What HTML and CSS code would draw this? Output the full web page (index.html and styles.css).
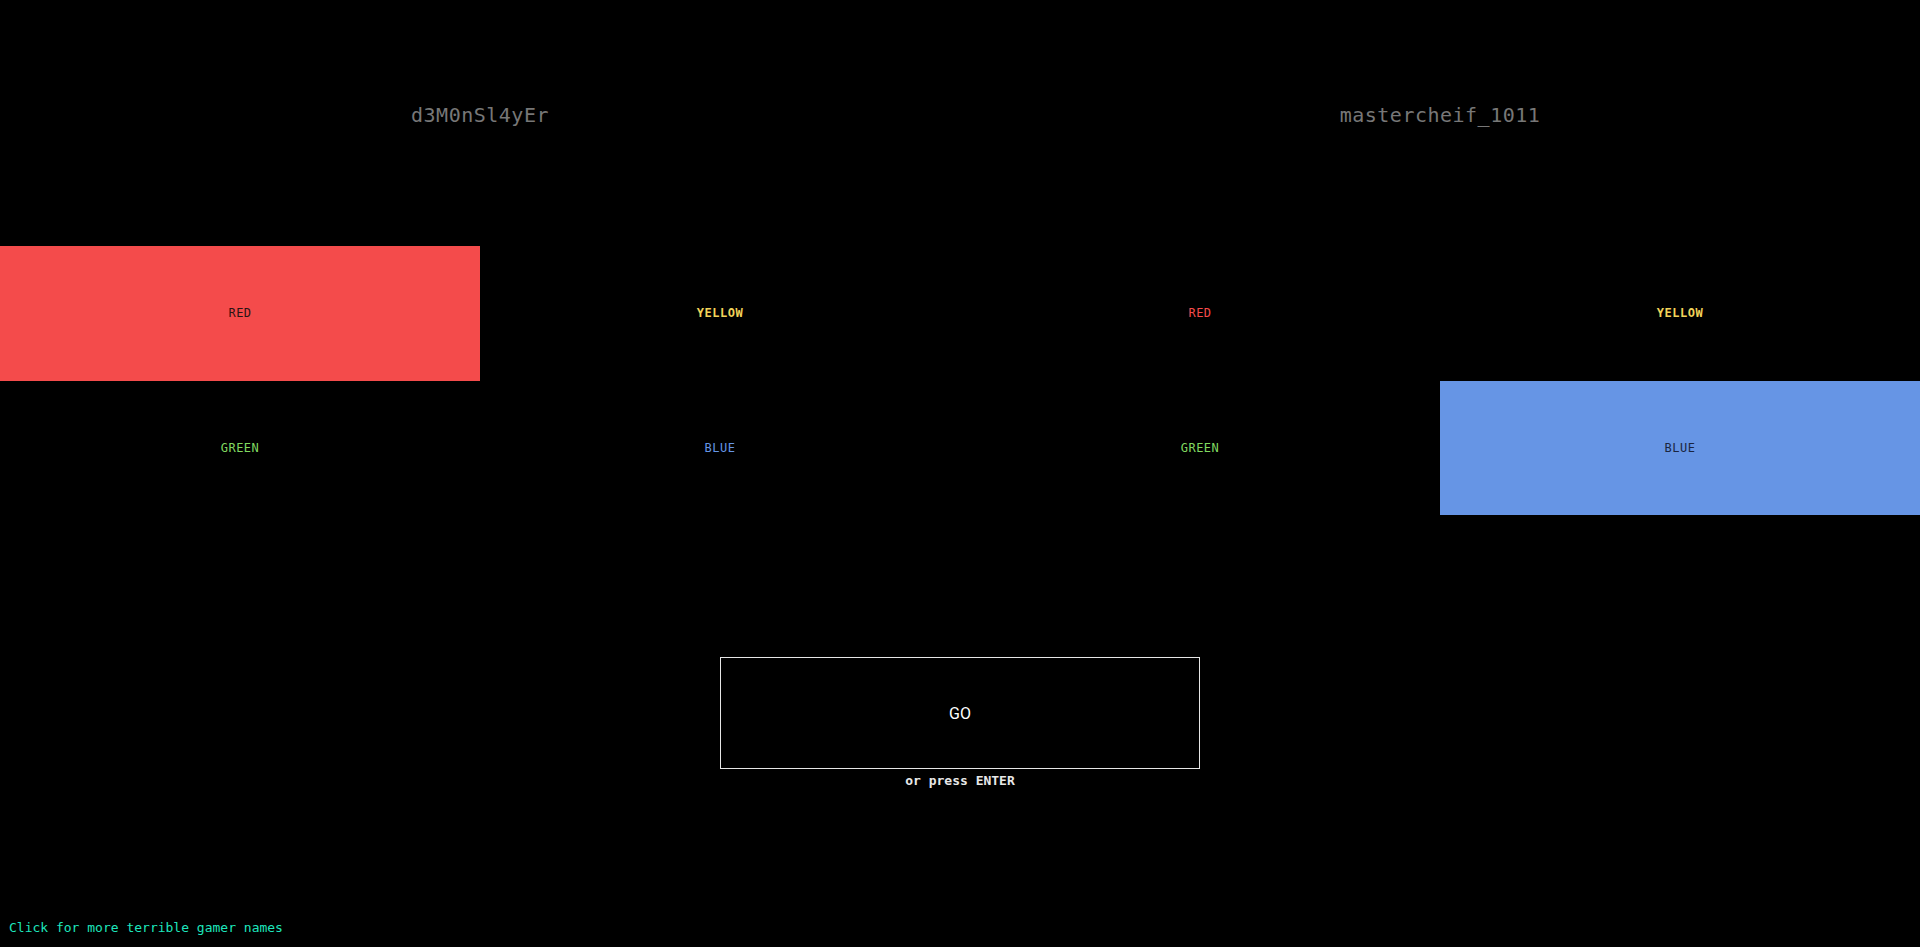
FILE: index.html
```html
<!DOCTYPE html>
<html>
<head>
<meta charset="utf-8">
<link rel="stylesheet" href="styles.css">
</head>
<body>
<div class="page">
  <header class="names">
    <div class="name">d3M0nSl4yEr</div>
    <div class="name">mastercheif_1011</div>
  </header>
  <section class="boards">
    <div class="board">
      <div class="cell red active">RED</div>
      <div class="cell yellow">YELLOW</div>
      <div class="cell green">GREEN</div>
      <div class="cell blue">BLUE</div>
    </div>
    <div class="board">
      <div class="cell red">RED</div>
      <div class="cell yellow">YELLOW</div>
      <div class="cell green">GREEN</div>
      <div class="cell blue active">BLUE</div>
    </div>
  </section>
  <section class="action">
    <button class="go">GO</button>
    <div class="hint">or press ENTER</div>
  </section>
  <footer class="footer">
    <a class="more" href="#">Click for more terrible gamer names</a>
  </footer>
</div>
</body>
</html>
```
FILE: styles.css
```css
html, body {
  margin: 0;
  padding: 0;
  background: #000;
}
.page {
  min-height: 947px;
  display: flex;
  flex-direction: column;
  font-family: "DejaVu Sans Mono", "Liberation Mono", monospace;
}
.names {
  display: grid;
  grid-template-columns: 1fr 1fr;
  padding-top: 101px;
}
.name {
  text-align: center;
  font-size: 20px;
  line-height: 28px;
  color: #777;
  letter-spacing: 0.5px;
}
.boards {
  display: grid;
  grid-template-columns: 1fr 1fr;
  margin-top: 117px;
}
.board {
  display: grid;
  grid-template-columns: 1fr 1fr;
  grid-auto-rows: 134.5px;
}
.cell {
  display: flex;
  align-items: center;
  justify-content: center;
  font-size: 12px;
  letter-spacing: 0.5px;
}
.cell.red { color: #f44b4b; }
.cell.yellow { color: #f2d45a; font-weight: bold; }
.cell.green { color: #80d860; }
.cell.blue { color: #6595e5; }
.cell.red.active { background: #f44b4b; color: #2a1414; }
.cell.blue.active { background: #6695e5; color: #1a2540; }
.action {
  display: flex;
  flex-direction: column;
  align-items: center;
  margin-top: 142px;
}
.go {
  width: 480px;
  height: 112px;
  background: #000;
  border: 1px solid #e6e6e6;
  color: #fff;
  font-family: Roboto, "Liberation Sans", sans-serif;
  font-size: 16px;
  padding: 0;
  cursor: pointer;
}
.hint {
  margin-top: 4px;
  font-size: 13px;
  line-height: 16px;
  font-weight: bold;
  color: #e8e8e8;
}
.footer {
  margin-top: auto;
  padding: 0 0 11px 9px;
}
.more {
  font-size: 13px;
  line-height: 16px;
  color: #1de6bd;
  text-decoration: none;
}
```
